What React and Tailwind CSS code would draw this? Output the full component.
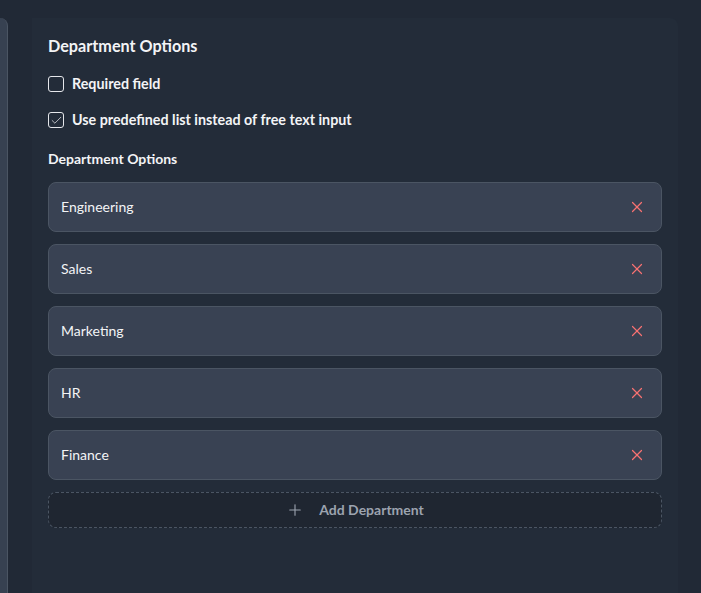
import React from "react";
import { X, Plus, Check } from "lucide-react";

const depts = ["Engineering", "Sales", "Marketing", "HR", "Finance"];

export default function App() {
  return (
    <div
      className="flex h-[593px] w-[701px] overflow-hidden bg-[#212936] text-gray-100"
      style={{ fontFamily: 'Lato, "Noto Sans", sans-serif' }}
    >
      <div className="mt-[18px] w-[8px] shrink-0 rounded-tr-lg border-r border-[#4b5563] bg-[#374151]" />
      <div className="ml-[24px] mt-[18px] w-[646px] shrink-0 rounded-tr-lg bg-[#232c39] px-4 pt-4">
        <h2 className="text-[16.2px] font-bold leading-6">Department Options</h2>
        <label className="mt-4 flex h-5 items-center gap-2 text-[14.3px] font-bold">
          <span className="h-4 w-4 rounded-[3px] border border-gray-200" />
          Required field
        </label>
        <label className="mt-4 flex h-5 items-center gap-2 text-[14.3px] font-bold">
          <span className="flex h-4 w-4 items-center justify-center rounded-[3px] border border-gray-200">
            <Check size={13} strokeWidth={1.3} />
          </span>
          Use predefined list instead of free text input
        </label>
        <div className="mt-[19px] text-sm font-bold leading-5">Department Options</div>
        <div className="mt-[13px] flex flex-col gap-3">
          {depts.map((d) => (
            <div
              key={d}
              className="flex h-[50px] items-center justify-between rounded-lg border border-[#4b5563] bg-[#394253] pl-3 pr-[15px] text-sm"
            >
              <span>{d}</span>
              <X size={18} strokeWidth={1.6} className="text-[#f87171]" />
            </div>
          ))}
          <button className="flex h-9 items-center justify-center gap-[15px] rounded-lg border border-dashed border-[#4b5563] bg-[#1f2631] text-sm font-bold text-[#9ca3af]">
            <Plus size={18} strokeWidth={1.5} />
            Add Department
          </button>
        </div>
      </div>
    </div>
  );
}
